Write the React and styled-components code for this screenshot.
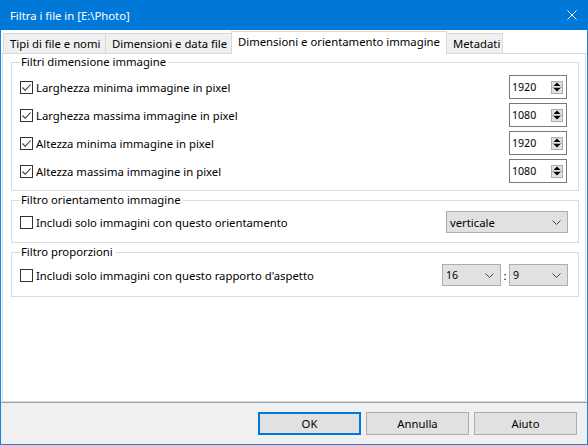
import React from 'react';
import styled, { createGlobalStyle } from 'styled-components';

const Global = createGlobalStyle`
  html, body { margin: 0; padding: 0; width: 588px; height: 445px; overflow: hidden; background: #fff; }
  *, *::before, *::after { box-sizing: border-box; }
  body { font-family: "Noto Sans", "Open Sans", sans-serif; font-size: 11.3px; color: #000; }
`;

const Window = styled.div`
  width: 588px;
  height: 445px;
  display: flex;
  flex-direction: column;
`;

const TitleBar = styled.div`
  height: 30px;
  flex: none;
  background: #0078d7;
  color: #fff;
  display: flex;
  align-items: center;
  justify-content: space-between;
  padding: 0 11px 0 10px;
  font-size: 11.3px;
`;

const Frame = styled.div`
  flex: 1;
  display: flex;
  flex-direction: column;
  border: 1px solid #1883d7;
  border-top: none;
  min-height: 0;
`;

const Body = styled.div`
  flex: 1;
  display: flex;
  flex-direction: column;
  background: #fff;
  padding: 0 1px 0 1px;
  min-height: 0;
`;

const TabStrip = styled.div`
  height: 23px;
  flex: none;
  display: flex;
  align-items: flex-end;
  padding-left: 1px;
  position: relative;
  z-index: 1;
`;

const Tab = styled.div`
  width: ${p => p.$w}px;
  height: ${p => (p.$active ? 23 : 20)}px;
  margin-bottom: ${p => (p.$active ? -1 : 0)}px;
  background: ${p => (p.$active ? '#fff' : '#f0f0f0')};
  border: 1px solid #d9d9d9;
  border-bottom: none;
  margin-left: ${p => (p.$first ? 0 : -1)}px;
  padding: ${p => (p.$active ? '1px 0 0 6px' : '0 0 0 6px')};
  display: flex;
  align-items: ${p => (p.$active ? 'flex-start' : 'center')};
  white-space: nowrap;
  line-height: 18px;
  position: relative;
  z-index: ${p => (p.$active ? 2 : 1)};
`;

const Panel = styled.div`
  flex: 1;
  border: 1px solid #d9d9d9;
  background: #fff;
  padding: 0 6px 0 8px;
  display: flex;
  flex-direction: column;
  gap: 1px;
`;

const Group = styled.fieldset`
  margin: 0;
  border: 1px solid #dcdcdc;
  padding: ${p => p.$pt}px 10px ${p => p.$pb}px 8px;
  min-width: 0;
  display: flex;
  flex-direction: column;
  gap: 4px;
`;

const Legend = styled.legend`
  padding: 0 2px 0 1px;
  line-height: 16px;
  font-size: 11.3px;
  margin-left: 0;
`;

const Row = styled.div`
  height: ${p => p.$h}px;
  display: flex;
  align-items: center;
  justify-content: space-between;
`;

const CheckLabel = styled.label`
  display: flex;
  align-items: center;
  gap: 3px;
  white-space: nowrap;
`;

const Box = styled.span`
  width: 13px;
  height: 13px;
  border: 1px solid #333;
  background: #fff;
  display: flex;
  align-items: center;
  justify-content: center;
`;

const Check = ({ checked, children }) => (
  <CheckLabel>
    <Box>
      {checked && (
        <svg width="11" height="11" viewBox="0 0 11 11">
          <path d="M1.5 5.5 L4.2 8.3 L9.6 2.5" fill="none" stroke="#333" strokeWidth="1.1" />
        </svg>
      )}
    </Box>
    {children}
  </CheckLabel>
);

const SpinBox = styled.div`
  width: 58px;
  height: 24px;
  margin-right: 1px;
  border: 1px solid #7a7a7a;
  background: #fff;
  display: flex;
  align-items: center;
  justify-content: space-between;
  padding: 0 3px 0 2px;
  font-size: 10.6px;
`;

const SpinButtons = styled.div`
  display: flex;
  flex-direction: column;
`;

const SpinBtn = styled.div`
  width: 12px;
  height: 7px;
  background: #e1e1e1;
  border: 1px solid #adadad;
  margin-top: ${p => (p.$down ? -1 : 0)}px;
  display: flex;
  align-items: center;
  justify-content: center;
`;

const Spinner = ({ value }) => (
  <SpinBox>
    <span>{value}</span>
    <SpinButtons>
      <SpinBtn>
        <svg width="8" height="4" viewBox="0 0 8 4"><path d="M0.5 4 L4 0.5 L7.5 4 Z" fill="#000" /></svg>
      </SpinBtn>
      <SpinBtn $down>
        <svg width="8" height="4" viewBox="0 0 8 4"><path d="M0.5 0 L4 3.5 L7.5 0 Z" fill="#000" /></svg>
      </SpinBtn>
    </SpinButtons>
  </SpinBox>
);

const SelectBox = styled.div`
  width: ${p => p.$w}px;
  height: 22px;
  background: #e1e1e1;
  border: 1px solid #adadad;
  display: flex;
  align-items: center;
  justify-content: space-between;
  padding: 0 6px 0 3px;
  font-size: ${p => (p.$num ? 10.6 : 11.3)}px;
`;

const Select = ({ w, value, num }) => (
  <SelectBox $w={w} $num={num}>
    <span>{value}</span>
    <svg width="9" height="5" viewBox="0 0 9 5">
      <path d="M0.5 0.5 L4.5 4.5 L8.5 0.5" fill="none" stroke="#444" strokeWidth="1" />
    </svg>
  </SelectBox>
);

const Ratio = styled.div`
  display: flex;
  align-items: center;
`;

const Colon = styled.span`
  width: 8px;
  text-align: center;
`;

const Footer = styled.div`
  height: 42px;
  flex: none;
  background: #f0f0f0;
  border-top: 1px solid #a0a0a0;
  display: flex;
  justify-content: flex-end;
  gap: 5px;
  padding: 9px 10px 0 0;
`;

const Button = styled.button`
  width: 103px;
  height: 23px;
  background: #e1e1e1;
  border: ${p => (p.$primary ? '2px solid #0078d7' : '1px solid #adadad')};
  font-family: inherit;
  font-size: 11.3px;
  color: #000;
  padding: 0;
  margin: 0;
`;

const rows = [
  ['Larghezza minima immagine in pixel', '1920'],
  ['Larghezza massima immagine in pixel', '1080'],
  ['Altezza minima immagine in pixel', '1920'],
  ['Altezza massima immagine in pixel', '1080'],
];

export default function App() {
  return (
    <>
      <Global />
      <Window>
        <TitleBar>
          <span>Filtra i file in [E:\Photo]</span>
          <svg width="10" height="10" viewBox="0 0 10 10">
            <path d="M0.5 0.5 L9.5 9.5 M9.5 0.5 L0.5 9.5" stroke="#fff" strokeWidth="1" />
          </svg>
        </TitleBar>
        <Frame>
          <Body>
            <TabStrip>
              <Tab $w={103} $first>Tipi di file e nomi</Tab>
              <Tab $w={127}>Dimensioni e data file</Tab>
              <Tab $w={216} $active>Dimensioni e orientamento immagine</Tab>
              <Tab $w={57}>Metadati</Tab>
            </TabStrip>
            <Panel>
              <Group $pt={5} $pb={7}>
                <Legend>Filtri dimensione immagine</Legend>
                {rows.map(([label, v]) => (
                  <Row key={label} $h={24}>
                    <Check checked>{label}</Check>
                    <Spinner value={v} />
                  </Row>
                ))}
              </Group>
              <Group $pt={3} $pb={9}>
                <Legend>Filtro orientamento immagine</Legend>
                <Row $h={22}>
                  <Check>Includi solo immagini con questo orientamento</Check>
                  <Select w={122} value="verticale" />
                </Row>
              </Group>
              <Group $pt={4} $pb={10}>
                <Legend>Filtro proporzioni</Legend>
                <Row $h={22}>
                  <Check>Includi solo immagini con questo rapporto d'aspetto</Check>
                  <Ratio>
                    <Select w={59} value="16" num />
                    <Colon>:</Colon>
                    <Select w={59} value="9" num />
                  </Ratio>
                </Row>
              </Group>
            </Panel>
          </Body>
          <Footer>
            <Button $primary>OK</Button>
            <Button>Annulla</Button>
            <Button>Aiuto</Button>
          </Footer>
        </Frame>
      </Window>
    </>
  );
}
